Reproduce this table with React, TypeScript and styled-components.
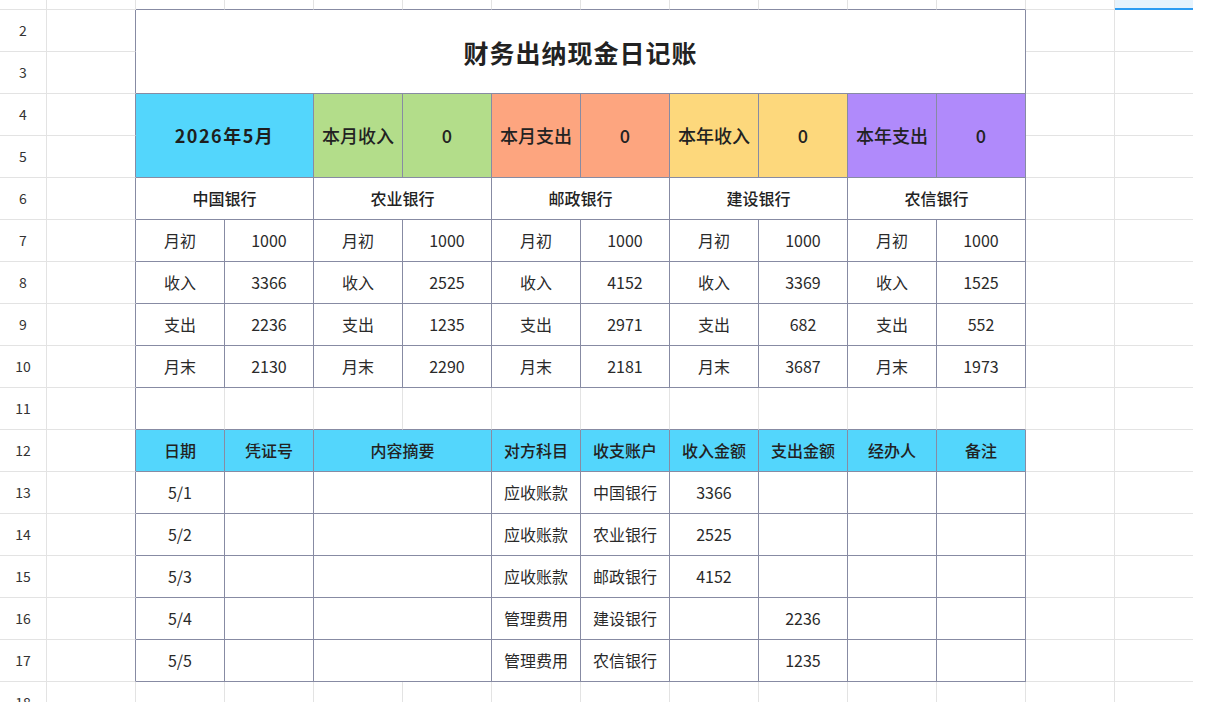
import React from 'react';
import styled, { createGlobalStyle, css } from 'styled-components';

const GRID = '#e3e3e3';
const DARK = '#878ba3';
const BLUE = '#53d6fc';
const GREEN = '#b3dd8a';
const ORANGE = '#fda57f';
const YELLOW = '#fdd87c';
const PURPLE = '#b08afb';

type Edge = 'grid' | 'dark' | 'none' | 'blue';
type Variant = 'rownum' | 'title' | 'date' | 'label' | 'num' | 'bank' | 'body' | 'head' | 'plain';

const edge = (e: Edge) =>
  e === 'grid'
    ? `1px solid ${GRID}`
    : e === 'dark'
    ? `1px solid ${DARK}`
    : e === 'blue'
    ? `2px solid #2d9cf2`
    : 'none';

const GlobalStyle = createGlobalStyle`
  html, body { margin: 0; padding: 0; background: #ffffff; }
  body { font-family: "Noto Sans CJK SC", "Noto Sans", sans-serif; color: #222; }
`;

const Sheet = styled.div`
  display: grid;
  grid-template-columns: 47px repeat(12, 89px) 78px;
  grid-template-rows: 10px repeat(17, 42px);
  width: 1210px;
  height: 702px;
  overflow: hidden;
  background: #ffffff;
`;

const variants: Record<Variant, ReturnType<typeof css>> = {
  rownum: css`font-size: 14px; color: #333;`,
  title: css`font-size: 25px; font-weight: 600; color: #222; letter-spacing: 1px;`,
  date: css`font-size: 18px; font-weight: 700; color: #1e1e1e; letter-spacing: 1.5px;`,
  label: css`font-size: 18px; font-weight: 500; color: #222;`,
  num: css`font-size: 18px; font-weight: 500; color: #222;`,
  bank: css`font-size: 16px; font-weight: 500; color: #222;`,
  body: css`font-size: 16px; color: #2a2a2a;`,
  head: css`font-size: 16px; font-weight: 500; color: #222;`,
  plain: css``,
};

const Cell = styled.div<{
  $span: number;
  $rspan: number;
  $bg: string;
  $r: Edge;
  $b: Edge;
  $v: Variant;
}>`
  grid-column: span ${(p) => p.$span};
  grid-row: span ${(p) => p.$rspan};
  box-sizing: border-box;
  min-width: 0;
  overflow: hidden;
  white-space: nowrap;
  display: flex;
  align-items: center;
  justify-content: center;
  line-height: 1.2;
  background: ${(p) => p.$bg};
  border-right: ${(p) => edge(p.$r)};
  border-bottom: ${(p) => edge(p.$b)};
  ${(p) => variants[p.$v]}
`;

type Spec = { t?: string; s?: number; rs?: number; bg?: string; r?: Edge; b?: Edge; v?: Variant };

const tableRow = (n: number | '', cells: Spec[], aRight: Edge = 'dark', mBg = '#fff', mB: Edge = 'grid'): Spec[] => [
  { t: String(n), v: 'rownum', r: 'grid', b: 'grid' },
  { r: aRight, b: 'grid' },
  ...cells.map((c) => ({ r: 'dark' as Edge, b: 'dark' as Edge, v: 'body' as Variant, ...c })),
  { r: 'grid', b: 'grid' },
  { r: 'none', b: mB, bg: mBg },
];

const pair = (bg: string, label: string): Spec[] => [
  { t: label, rs: 2, bg, v: 'label' },
  { t: '0', rs: 2, bg, v: 'num' },
];

const banks = ['中国银行', '农业银行', '邮政银行', '建设银行', '农信银行'];
const stats: [string, number[]][] = [
  ['月初', [1000, 1000, 1000, 1000, 1000]],
  ['收入', [3366, 2525, 4152, 3369, 1525]],
  ['支出', [2236, 1235, 2971, 682, 552]],
  ['月末', [2130, 2290, 2181, 3687, 1973]],
];

const heads = ['日期', '凭证号', '内容摘要', '对方科目', '收支账户', '收入金额', '支出金额', '经办人', '备注'];

const entries: [string, string, string, string, string][] = [
  ['5/1', '应收账款', '中国银行', '3366', ''],
  ['5/2', '应收账款', '农业银行', '2525', ''],
  ['5/3', '应收账款', '邮政银行', '4152', ''],
  ['5/4', '管理费用', '建设银行', '', '2236'],
  ['5/5', '管理费用', '农信银行', '', '1235'],
];

const buildRows = (): Spec[] => {
  const rows: Spec[] = [];
  // row 1 (partial)
  rows.push({ r: 'grid', b: 'grid' }, { r: 'grid', b: 'grid' });
  for (let i = 0; i < 10; i++) rows.push({ r: 'grid', b: 'dark' });
  rows.push({ r: 'grid', b: 'grid' }, { r: 'none', b: 'blue', bg: '#e6f3fd' });
  // row 2-3 title
  rows.push(...tableRow(2, [{ t: '财务出纳现金日记账', s: 10, rs: 2, v: 'title' }]));
  rows.push(...tableRow(3, []));
  // row 4-5 summary
  rows.push(
    ...tableRow(4, [
      { t: '2026年5月', s: 2, rs: 2, bg: BLUE, v: 'date' },
      ...pair(GREEN, '本月收入'),
      ...pair(ORANGE, '本月支出'),
      ...pair(YELLOW, '本年收入'),
      ...pair(PURPLE, '本年支出'),
    ])
  );
  rows.push(...tableRow(5, []));
  // row 6 banks
  rows.push(...tableRow(6, banks.map((b) => ({ t: b, s: 2, v: 'bank' as Variant }))));
  // rows 7-10
  stats.forEach(([label, vals], i) => {
    rows.push(...tableRow(7 + i, vals.flatMap((v) => [{ t: label }, { t: String(v) }])));
  });
  // row 11 spacer
  rows.push(...tableRow(11, Array.from({ length: 10 }, () => ({ r: 'grid' as Edge, b: 'dark' as Edge }))));
  // row 12 heads
  rows.push(
    ...tableRow(
      12,
      heads.map((h, i) => ({ t: h, s: i === 2 ? 2 : 1, bg: BLUE, v: 'head' as Variant }))
    )
  );
  // rows 13-17
  entries.forEach(([d, subj, acc, inc, out], i) => {
    rows.push(
      ...tableRow(13 + i, [
        { t: d },
        {},
        { s: 2 },
        { t: subj },
        { t: acc },
        { t: inc },
        { t: out },
        {},
        {},
      ])
    );
  });
  // row 18 (partial)
  rows.push({ t: '18', v: 'rownum', r: 'grid', b: 'grid' }, { r: 'grid', b: 'grid' });
  for (let i = 0; i < 11; i++) rows.push({ r: 'grid', b: 'grid' });
  rows.push({ r: 'none', b: 'grid' });
  return rows;
};

const cells = buildRows();

export default function App() {
  return (
    <>
      <GlobalStyle />
      <Sheet>
        {cells.map((c, i) => (
          <Cell
            key={i}
            $span={c.s ?? 1}
            $rspan={c.rs ?? 1}
            $bg={c.bg ?? '#ffffff'}
            $r={c.r ?? 'grid'}
            $b={c.b ?? 'grid'}
            $v={c.v ?? 'plain'}
          >
            {c.t}
          </Cell>
        ))}
      </Sheet>
    </>
  );
}
